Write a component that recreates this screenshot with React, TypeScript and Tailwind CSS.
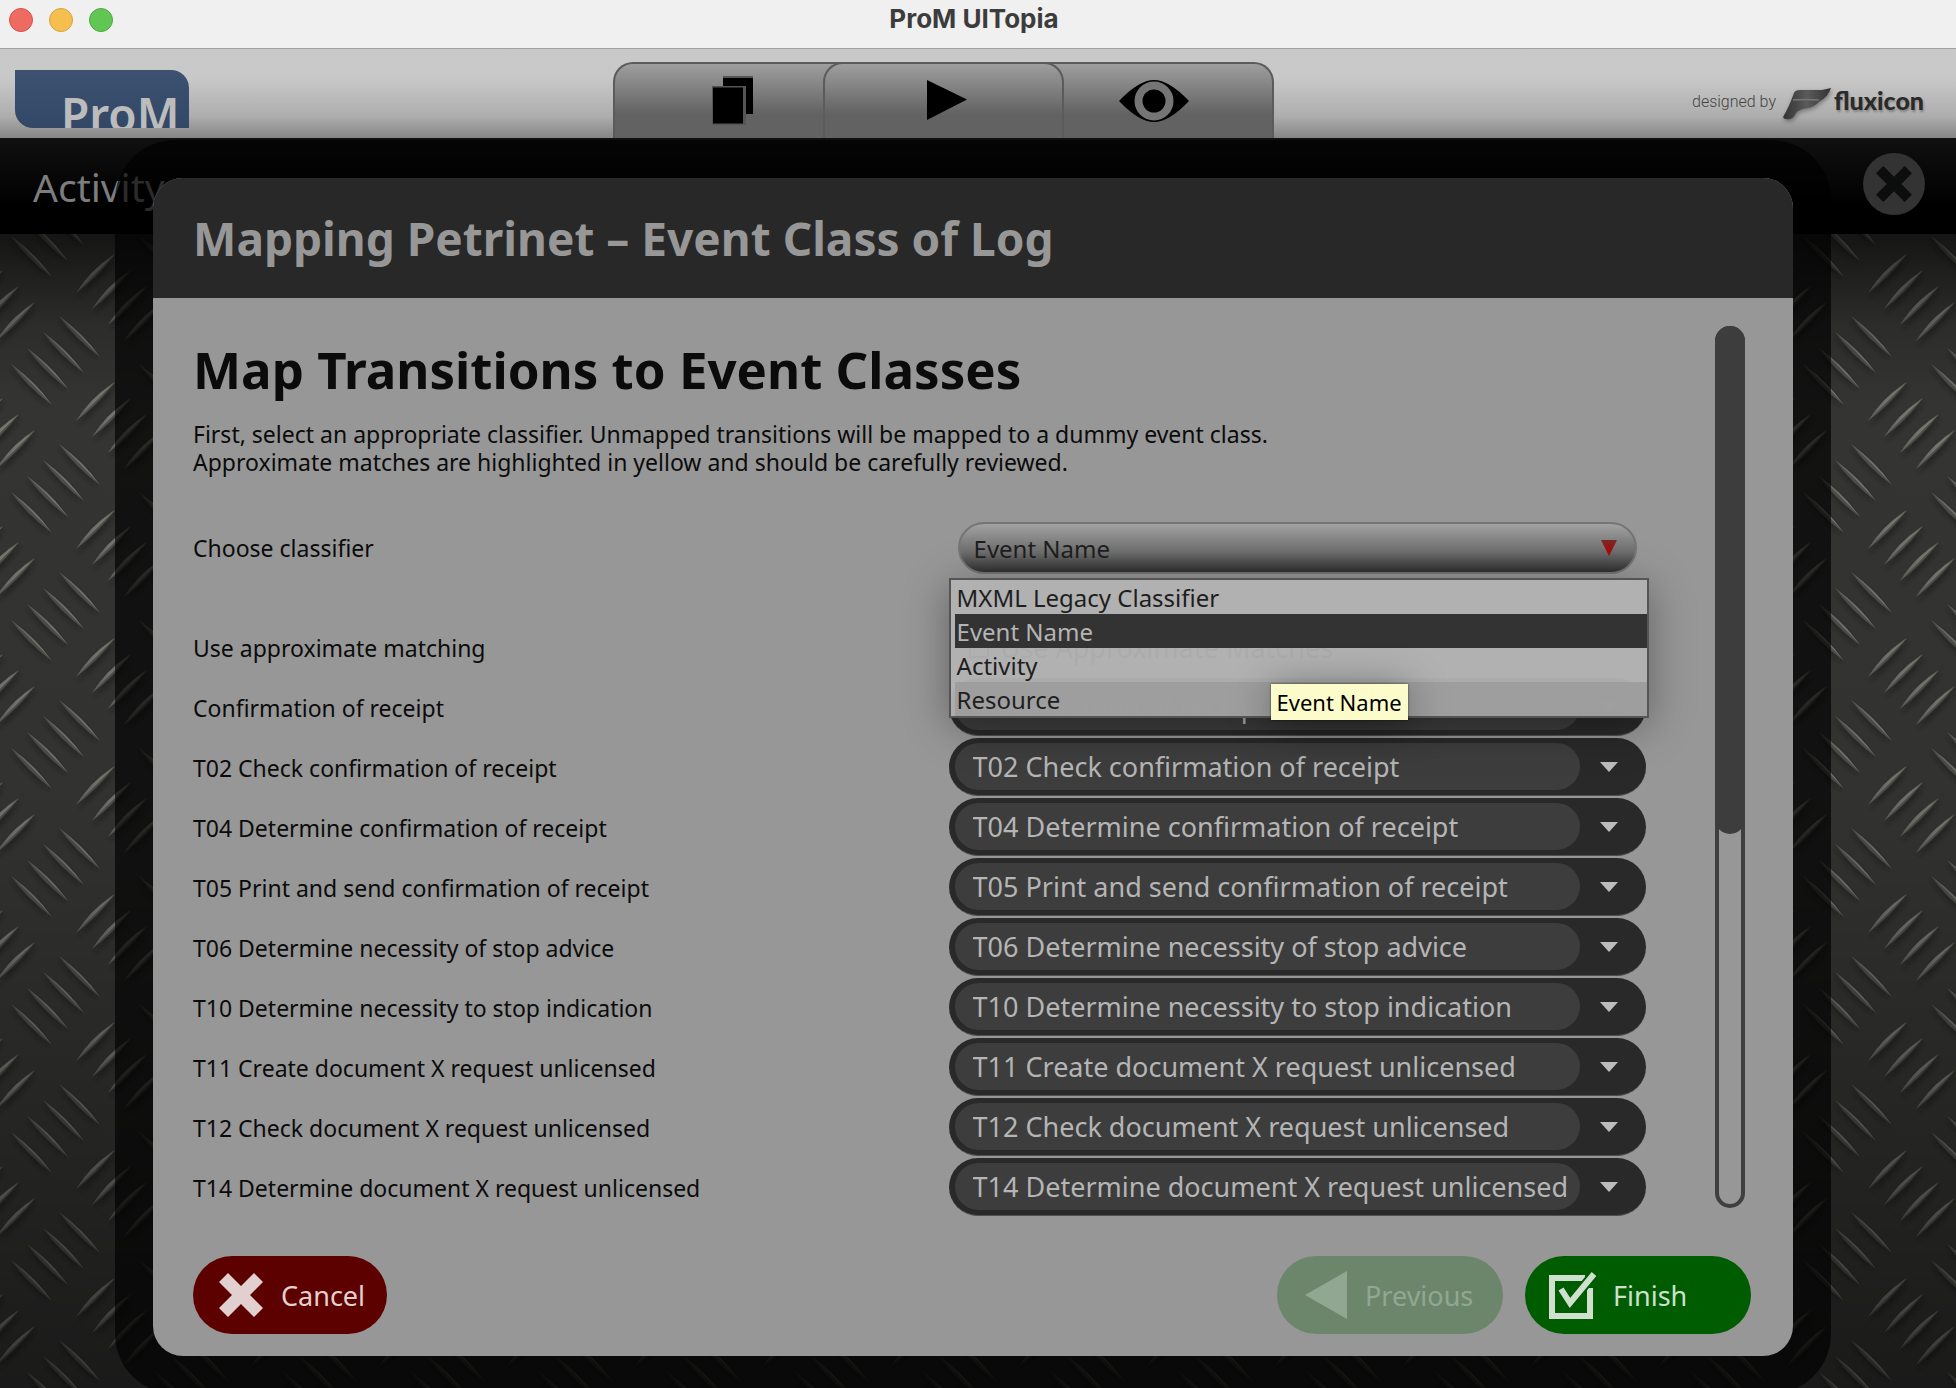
import React from "react";

const transitions = [
  "Confirmation of receipt",
  "T02 Check confirmation of receipt",
  "T04 Determine confirmation of receipt",
  "T05 Print and send confirmation of receipt",
  "T06 Determine necessity of stop advice",
  "T10 Determine necessity to stop indication",
  "T11 Create document X request unlicensed",
  "T12 Check document X request unlicensed",
  "T14 Determine document X request unlicensed",
];

const classifiers = ["MXML Legacy Classifier", "Event Name", "Activity", "Resource"];

// Ridges of one 128px steel plate tile: start points of the two diagonal groups.
const fallingRidges = [
  [59, 60],
  [43, 76],
  [27, 92],
  [11, 108],
];
const risingRidges = [
  [115, -2],
  [131, 14],
  [147, 30],
  [163, 46],
];
const wraps = [
  [0, 0],
  [-128, 0],
  [0, -128],
  [-128, -128],
  [0, 128],
  [-128, 128],
];

function SteelPlate() {
  return (
    <svg className="absolute inset-0 h-full w-full" aria-hidden="true">
      <defs>
        <linearGradient id="fall" x1="0" y1="0" x2="1" y2="1">
          <stop offset="0" stopColor="#77776f" stopOpacity="0.5" />
          <stop offset="0.6" stopColor="#74746d" />
          <stop offset="1" stopColor="#8a8a80" stopOpacity="0.4" />
        </linearGradient>
        <linearGradient id="rise" x1="1" y1="0" x2="0" y2="1">
          <stop offset="0" stopColor="#8c8c82" stopOpacity="0.6" />
          <stop offset="0.5" stopColor="#74746d" />
          <stop offset="1" stopColor="#77776f" stopOpacity="0.4" />
        </linearGradient>
        <linearGradient id="shade" x1="0" y1="0" x2="0" y2="1">
          <stop offset="0" stopColor="#000" stopOpacity="0.6" />
          <stop offset="0.08" stopColor="#000" stopOpacity="0.15" />
          <stop offset="0.15" stopColor="#000" stopOpacity="0" />
          <stop offset="0.5" stopColor="#000" stopOpacity="0.05" />
          <stop offset="1" stopColor="#000" stopOpacity="0.5" />
        </linearGradient>
        <filter id="soft">
          <feGaussianBlur stdDeviation="2" />
        </filter>
        <pattern id="plate" width="128" height="128" patternUnits="userSpaceOnUse" patternTransform="translate(0,-106)">
          <rect width="128" height="128" fill="#343433" />
          {wraps.map(([dx, dy]) => (
            <g key={`${dx},${dy}`} transform={`translate(${dx},${dy})`}>
              {fallingRidges.map(([x, y]) => (
                <g key={x} transform={`translate(${x},${y})`}>
                  <path d="M-1 3Q16 27 39 43Q24 18 -1 3Z" fill="#1a1a19" opacity="0.6" filter="url(#soft)" />
                  <path d="M0 0Q16 23 41 41Q25 18 0 0Z" fill="#4c4c49" />
                  <path d="M0 0Q22 20 41 41Q25 18 0 0Z" fill="url(#fall)" />
                </g>
              ))}
              {risingRidges.map(([x, y]) => (
                <g key={x} transform={`translate(${x},${y})`}>
                  <path d="M2 3Q-14 28 -37 43Q-23 17 2 3Z" fill="#1a1a19" opacity="0.6" filter="url(#soft)" />
                  <path d="M0 0Q-17 23 -39 39Q-24 15 0 0Z" fill="#4c4c49" />
                  <path d="M0 0Q-20 20 -39 39Q-24 15 0 0Z" fill="url(#rise)" />
                </g>
              ))}
            </g>
          ))}
        </pattern>
      </defs>
      <rect width="100%" height="100%" fill="url(#plate)" />
      <rect width="100%" height="100%" fill="url(#shade)" />
    </svg>
  );
}

function TitleBar() {
  return (
    <header className="relative flex h-[49px] items-start border-b border-[#a0a0a0] bg-[#f0f0f0] px-[9px] pt-2">
      <div className="flex gap-4">
        <button aria-label="Close window" className="size-6 rounded-full border border-[#d8504a] bg-[#ed6b60]" />
        <button aria-label="Minimize window" className="size-6 rounded-full border border-[#d9a03c] bg-[#f5bf50]" />
        <button aria-label="Zoom window" className="size-6 rounded-full border border-[#4da73c] bg-[#62c655]" />
      </div>
      <h1 className="absolute inset-x-0 top-0 pr-2 text-center font-['Inter',sans-serif] text-[26px] leading-[38px] font-bold text-[#3c3c3c]">
        ProM UITopia
      </h1>
    </header>
  );
}

function Toolbar() {
  return (
    <nav className="grid h-[89px] grid-cols-[613fr_661fr_682fr] bg-[linear-gradient(#c9c9c9_0%,#c8c8c8_33%,#adadad_76%,#858585_100%)]">
      <div className="pt-[21px] pl-[15px]">
        <div className="h-[58px] w-[174px] overflow-hidden rounded-tr-[18px] rounded-bl-[18px] bg-linear-to-b from-[#3d5170] to-[#324866] pl-[46px]">
          <div className="mt-[21px] text-[46px] leading-[46px] font-semibold text-[#bcbcbc]">ProM</div>
        </div>
      </div>
      <div className="mt-[13px] grid grid-cols-[209fr_243fr_209fr] rounded-t-[20px] border-2 border-b-0 border-[#5b5b5b] bg-[linear-gradient(#9e9e9e,#626262_68%)]">
        <button aria-label="Workspace" className="flex items-start justify-center pt-3 pl-7">
          <svg width="42" height="50" viewBox="0 0 42 50">
            <path d="M11 1h30v37h-30z" fill="#000" />
            <path d="M11 0h30v2h-30z" fill="#555" />
            <path d="M0 10h34v39h-34z" fill="#555" />
            <path d="M1 11.500h30v36h-30z" fill="#000" />
          </svg>
        </button>
        <button
          aria-label="Actions"
          className="-mt-[2px] flex items-start justify-center rounded-t-[20px] border-2 border-b-0 border-[#5b5b5b] bg-[linear-gradient(#9e9e9e,#626262_68%)] pt-4 pl-2"
        >
          <svg width="40" height="40" viewBox="0 0 40 40">
            <path d="M0 0L40 19.500L0 40z" />
          </svg>
        </button>
        <button aria-label="Views" className="flex items-start justify-center pt-4 pr-7">
          <svg width="70" height="42" viewBox="0 0 70 42">
            <path d="M0 21Q20 0 35 0Q50 0 70 21Q50 42 35 42Q20 42 0 21Z" fill="#000" />
            <circle cx="35" cy="21" r="19.500" fill="#757575" />
            <circle cx="35" cy="21" r="11.500" fill="#000" />
          </svg>
        </button>
      </div>
      <div className="flex items-start justify-end pt-[34px] pr-8 text-[#333]">
        <a href="#fluxicon" className="flex items-start">
          <span className="mr-[6px] font-['Roboto',sans-serif] text-[16px] leading-[38px] font-light text-[#444]">designed by</span>
          <svg width="50" height="38" viewBox="0 -2 50 38" className="drop-shadow-[1px_2px_2px_rgba(0,0,0,0.35)]">
            <defs>
              <linearGradient id="mark" x1="0" y1="0" x2="1" y2="0">
                <stop offset="0" stopColor="#333" />
                <stop offset="0.5" stopColor="#5a5a5a" />
                <stop offset="1" stopColor="#333" />
              </linearGradient>
            </defs>
            <path d="M12 8Q13 5 18 5L40 5L49 3Q46 12 38 16Q32 22 26 23Q17 24 14 28Q12 33 8 34Q2 35 1 32Q7 22 12 8Z" fill="url(#mark)" />
            <path d="M11 15Q24 14 37 15" stroke="#777" strokeWidth="1.500" fill="none" />
          </svg>
          <span className="ml-[2px] font-['Lato',sans-serif] text-[25px] leading-[34px] font-black text-[#2a2a2a] [text-shadow:1px_2px_2px_rgba(0,0,0,0.25)]">
            fluxicon
          </span>
        </a>
      </div>
    </nav>
  );
}

function ClassifierPopup() {
  return (
    <div
      role="listbox"
      aria-label="Classifiers"
      className="absolute top-14 -right-[3px] left-0 z-10 border-2 border-[#555] bg-[#b2b2b2]/96 pl-1 shadow-[0_8px_40px_rgba(0,0,0,0.35)]"
    >
      {classifiers.map((name) => {
        const tone =
          name === "Event Name" ? "bg-[#262626]/90 text-[#b5b5b5]" : name === "Resource" ? "bg-[#9c9c9c]/90 text-[#1e1e1e]" : "text-[#1e1e1e]";
        return (
          <button
            key={name}
            role="option"
            aria-selected={name === "Event Name"}
            className={`block h-[34px] w-full pl-[2px] text-left text-[24px] leading-9 ${tone}`}
          >
            {name}
          </button>
        );
      })}
      <div
        role="tooltip"
        className="absolute top-[104px] left-[320px] bg-[#fcfccb] px-[6px] text-[22px] leading-9 whitespace-nowrap text-black shadow-[0_4px_40px_rgba(0,0,0,0.4),0_0_2px_rgba(0,0,0,0.6)]"
      >
        Event Name
      </div>
    </div>
  );
}

function MappingRow({ name, index }: { name: string; index: number }) {
  const id = `transition-${index}`;
  return (
    <div className="grid h-[60px] grid-cols-[52fr_48fr]">
      <label htmlFor={id} className="text-[23px] leading-[60px]">
        {name}
      </label>
      <div className="flex h-[58px] items-center rounded-full border-b border-[#505050] bg-[#292929] py-[5px] pr-7 pl-[6px]">
        <select id={id} defaultValue={name} className="h-[47px] min-w-0 flex-1 appearance-none rounded-full bg-[#3d3d3d] pt-[2px] pl-[18px] text-[27px] text-[#b5b5b5] outline-none">
          <option>{name}</option>
        </select>
        <svg width="18" height="10" viewBox="0 0 18 10" className="ml-5" aria-hidden="true">
          <path d="M0 0h18L9 10z" fill="#bcbcbc" />
        </svg>
      </div>
    </div>
  );
}

function MappingDialog() {
  return (
    <div className="absolute top-[140px] right-[125px] left-[115px] rounded-[60px] bg-black/65 p-[38px]">
      <section role="dialog" aria-labelledby="dialog-title" className="overflow-hidden rounded-[30px] bg-[#979797]">
        <header className="flex h-[120px] items-center bg-[#282828] px-10">
          <h2 id="dialog-title" className="text-[46px] leading-[60px] font-bold text-[#979797]">
            Mapping Petrinet – Event Class of Log
          </h2>
        </header>
        <div className="flex pt-7 pr-12 pl-10 text-[#0b0b0b]">
          <div className="min-w-0 flex-1 pt-[11px]">
            <h3 className="text-[51px] leading-[64px] font-bold">Map Transitions to Event Classes</h3>
            <p className="mt-[19px] text-[23px] leading-7">
              First, select an appropriate classifier. Unmapped transitions will be mapped to a dummy event class.
              <br />
              Approximate matches are highlighted in yellow and should be carefully reviewed.
            </p>
            <div className="mt-[46px] grid h-[52px] grid-cols-[52fr_48fr]">
              <label htmlFor="classifier" className="text-[23px] leading-[52px]">
                Choose classifier
              </label>
              <div className="relative px-[9px]">
                <select
                  id="classifier"
                  defaultValue="Event Name"
                  className="h-[52px] w-full appearance-none rounded-full border-2 border-[#757575] bg-[linear-gradient(#a2a2a2,#6c6c6c_60%,#303030)] pt-[2px] pl-[14px] text-[24px] text-[#1e1e1e] outline-none"
                >
                  {classifiers.map((name) => (
                    <option key={name}>{name}</option>
                  ))}
                </select>
                <svg width="16" height="16" viewBox="0 0 16 16" className="pointer-events-none absolute top-[18px] right-[29px]" aria-hidden="true">
                  <defs>
                    <linearGradient id="red" x1="0" y1="0" x2="0" y2="1">
                      <stop offset="0" stopColor="#7a2a2a" />
                      <stop offset="0.5" stopColor="#9c1212" />
                      <stop offset="1" stopColor="#b00505" />
                    </linearGradient>
                  </defs>
                  <path d="M0 0h16L8 16z" fill="url(#red)" />
                </svg>
                <ClassifierPopup />
              </div>
            </div>
            <div className="mt-11 grid h-[60px] grid-cols-[52fr_48fr]">
              <label htmlFor="approximate" className="text-[23px] leading-[60px]">
                Use approximate matching
              </label>
              <label className="flex items-center gap-3 pl-5 text-[27px]">
                <input id="approximate" type="checkbox" defaultChecked className="size-5 appearance-none border-2 border-black" />
                Use Approximate Matches
              </label>
            </div>
            {transitions.map((name, index) => (
              <MappingRow key={name} name={name} index={index} />
            ))}
          </div>
          <div className="mb-[10px] ml-[69px] w-[30px] rounded-full border-4 border-[#3f3f3f]" role="scrollbar" aria-controls="dialog-title" aria-valuenow={0}>
            <div className="-mx-1 -mt-1 h-[508px] rounded-full bg-[#3d3d3d]" />
          </div>
        </div>
        <footer className="flex items-center gap-[22px] px-[42px] pt-[38px] pb-[22px] pl-10 text-[27px]">
          <button className="mr-auto flex h-[78px] w-[194px] items-center gap-[18px] rounded-full bg-[#5c0000] pl-[26px] text-[#e2d0d0]">
            <svg width="44" height="44" viewBox="0 0 44 44" aria-hidden="true">
              <path d="M9 0L22 13L35 0L44 9L31 22L44 35L35 44L22 31L9 44L0 35L13 22L0 9z" fill="currentColor" />
            </svg>
            <span className="pt-[2px]">Cancel</span>
          </button>
          <button disabled className="flex h-[78px] w-[226px] items-center gap-[18px] rounded-full bg-[#6c866c] pl-7 text-[#92a792]">
            <svg width="42" height="48" viewBox="0 0 42 48" aria-hidden="true">
              <path d="M42 0V48L0 24z" fill="currentColor" />
            </svg>
            <span className="pt-[2px]">Previous</span>
          </button>
          <button className="flex h-[78px] w-[226px] items-center gap-4 rounded-full bg-[#005c00] pl-6 text-[#cfe0cf]">
            <svg width="48" height="48" viewBox="0 0 48 48" aria-hidden="true">
              <path d="M36 7H3V45H41V17" fill="none" stroke="currentColor" strokeWidth="6" />
              <path d="M12 18L21 32L45 3" fill="none" stroke="#005c00" strokeWidth="10" />
              <path d="M12 18L21 32L45 3" fill="none" stroke="currentColor" strokeWidth="6" />
            </svg>
            <span className="pt-[2px]">Finish</span>
          </button>
        </footer>
      </section>
    </div>
  );
}

export default function App() {
  return (
    <div className="relative flex h-screen flex-col overflow-hidden bg-[#222] font-['Noto_Sans',sans-serif]">
      <TitleBar />
      <Toolbar />
      <div className="flex h-24 items-center justify-between bg-[linear-gradient(#101010,#000_70%)] pr-[31px] pl-[33px]">
        <h2 className="pt-[2px] text-[39px] text-[#7d7d7d]">Activity</h2>
        <button aria-label="Close activity" className="mb-1 flex size-[62px] items-center justify-center rounded-full bg-[#333]">
          <svg width="36" height="36" viewBox="0 0 44 44" aria-hidden="true">
            <path d="M9 0L22 13L35 0L44 9L31 22L44 35L35 44L22 31L9 44L0 35L13 22L0 9z" fill="#0c0e0e" />
          </svg>
        </button>
      </div>
      <main className="relative flex-1">
        <SteelPlate />
      </main>
      <MappingDialog />
    </div>
  );
}
